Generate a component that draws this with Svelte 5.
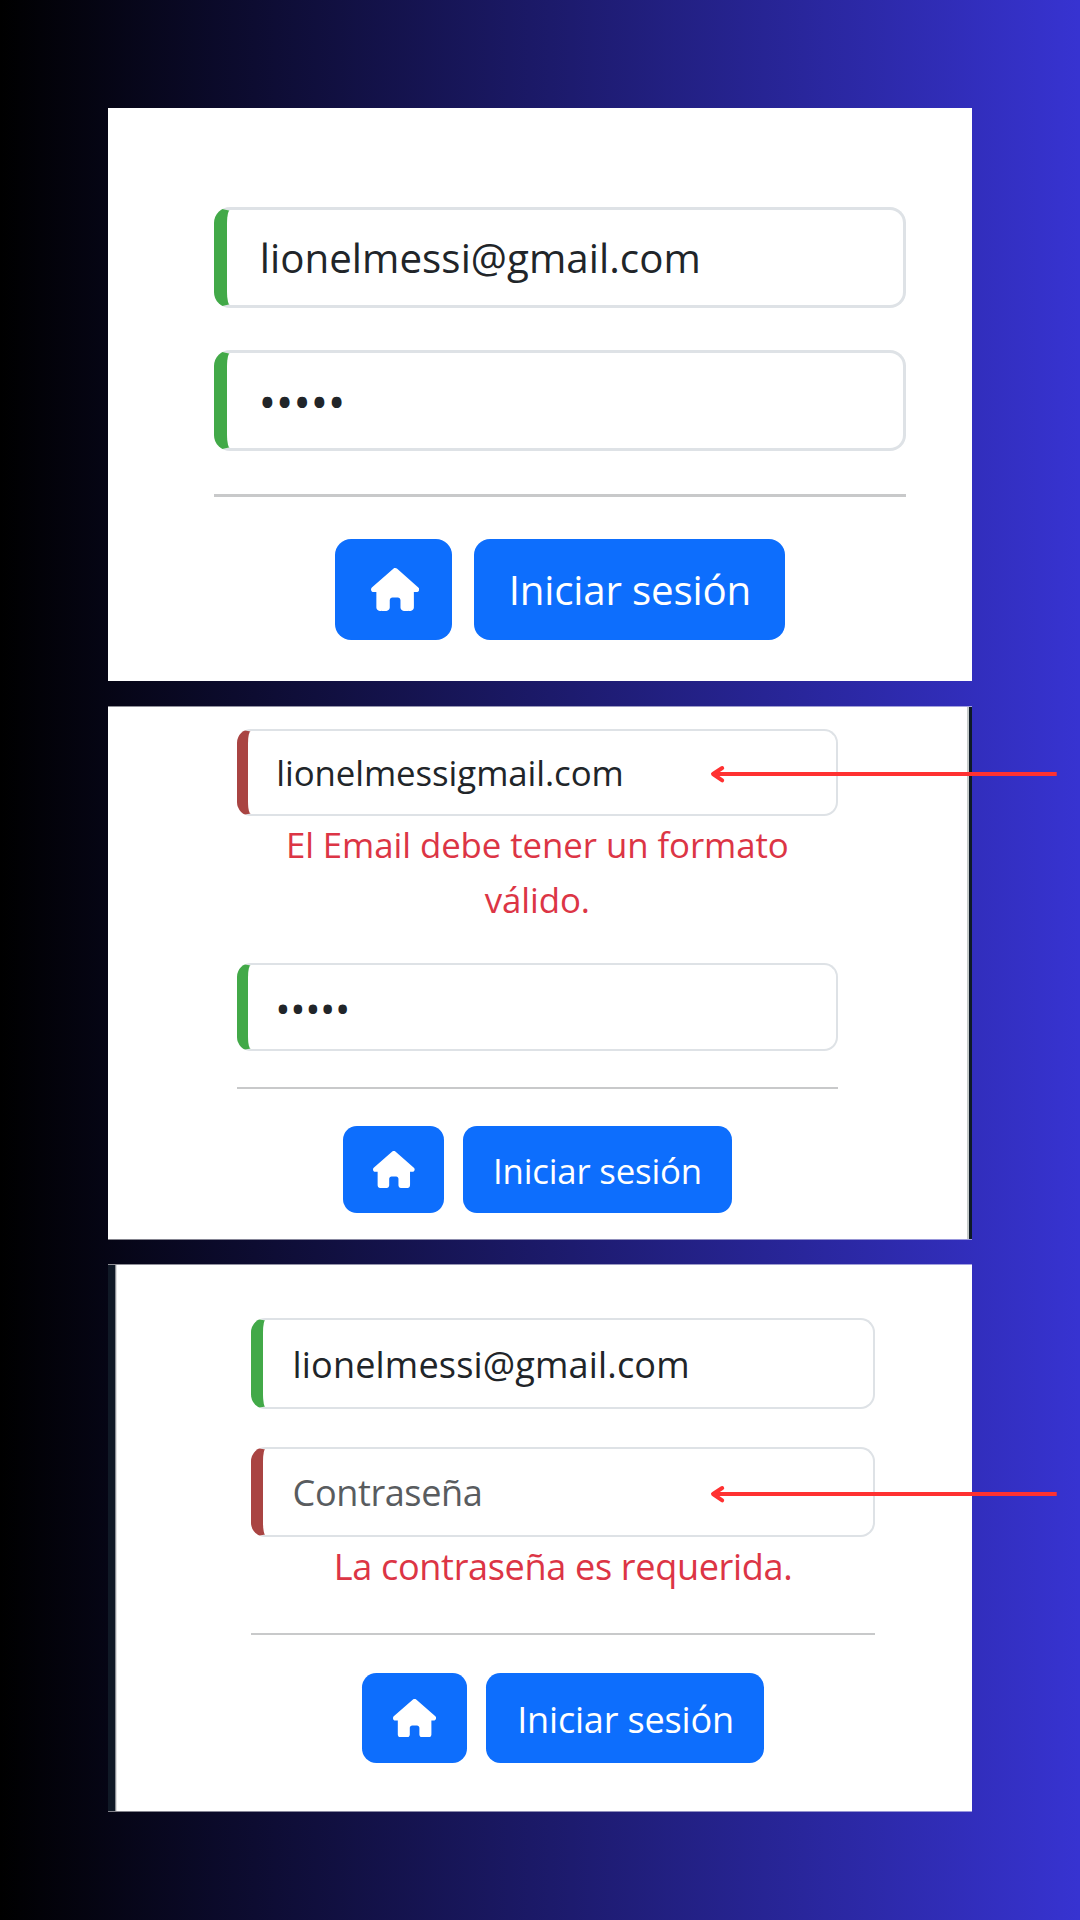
<script>
  const panels = [
    {
      id: 'valid',
      fields: [
        { kind: 'email', value: 'lionelmessi@gmail.com', ok: true },
        { kind: 'dots', value: '•••••', ok: true }
      ]
    },
    {
      id: 'bad-email',
      fields: [
        { kind: 'email', value: 'lionelmessigmail.com', ok: false, error: 'El Email debe tener un formato válido.', arrow: true },
        { kind: 'dots', value: '•••••', ok: true }
      ]
    },
    {
      id: 'no-password',
      fields: [
        { kind: 'email', value: 'lionelmessi@gmail.com', ok: true },
        { kind: 'placeholder', value: 'Contraseña', ok: false, error: 'La contraseña es requerida.', arrow: true }
      ]
    }
  ];
</script>

<main class="page">
  {#each panels as panel (panel.id)}
    <section class="panel {panel.id}">
      <div class="form">
        {#each panel.fields as field}
          <div class="group">
            <div class="control {field.kind}" class:ok={field.ok}>
              <span>{field.value}</span>
              {#if field.arrow}
                <svg class="arrow" viewBox="0 0 348 20" fill="none" stroke="#ff3131" stroke-width="4">
                  <path d="M3 10H346.7" />
                  <path d="M12.2 4L3 10L12.2 16.3" stroke-linecap="round" stroke-linejoin="round" />
                </svg>
              {/if}
            </div>
            {#if field.error}<p class="error">{field.error}</p>{/if}
          </div>
        {/each}
        <div class="rule"></div>
        <div class="actions">
          <button class="home" aria-label="Inicio">
            <svg viewBox="0 0 576 512" fill="currentColor">
              <path d="M575.8 255.5c0 18-15 32.1-32 32.1h-32l.7 160.2c0 2.7-.2 5.4-.5 8.1V472c0 22.1-17.9 40-40 40H456c-1.1 0-2.2 0-3.3-.1c-1.4 .1-2.8 .1-4.2 .1H416 392c-22.1 0-40-17.9-40-40V448 384c0-17.7-14.3-32-32-32H256c-17.7 0-32 14.3-32 32v64 24c0 22.1-17.9 40-40 40H160 128.1c-1.5 0-3-.1-4.5-.2c-1.2 .1-2.4 .2-3.6 .2H104c-22.1 0-40-17.9-40-40V360c0-.9 0-1.9 .1-2.8V287.6H32c-18 0-32-14-32-32.1c0-9 3-17 10-24L266.4 8c7-7 15-8 22-8s15 2 21 7L564.8 231.5c8 7 12 15 11 24z" />
            </svg>
          </button>
          <button class="login">Iniciar sesión</button>
        </div>
      </div>
    </section>
  {/each}
</main>

<style>
  :global(body) {
    margin: 0;
  }

  .page {
    box-sizing: border-box;
    width: 1080px;
    height: 1920px;
    padding: 108px 108px 0;
    overflow: hidden;
    background: linear-gradient(90deg, #000 0%, #3733d1 100%);
    font-family: 'Open Sans', 'Noto Sans', sans-serif;
  }

  /* --u and --v are the horizontal and vertical zoom of one form pixel */
  .panel {
    box-sizing: border-box;
    background: #fff;
    background-clip: padding-box;
    font-size: calc(var(--u) * 15.04);
  }

  .valid {
    --u: 2.68px;
    --v: 2.654px;
    --line: 3px;
    height: 573px;
    padding: 99px 0 0 106px;
  }

  .bad-email {
    --u: 2.315px;
    --v: 2.297px;
    --line: 2px;
    height: 534px;
    margin-top: 25px;
    padding: 22px 0 0 129px;
    border-top: 1px solid rgb(255 255 255 / 0.55);
    border-bottom: 1px solid rgb(255 255 255 / 0.5);
    background-image: linear-gradient(90deg, transparent 859px, #c5cac9 859px 861px, #0d1a26 861px);
  }

  .no-password {
    --u: 2.4px;
    --v: 2.383px;
    --line: 2px;
    height: 548px;
    margin-top: 24px;
    padding: 53px 0 0 143.3px;
    border-top: 1px solid rgb(255 255 255 / 0.55);
    border-bottom: 1px solid rgb(255 255 255 / 0.5);
    background-image: linear-gradient(90deg, #101926 7px, #8b8f95 7px 8px, #dedede 8px 9px, transparent 9px);
  }

  .form {
    width: 692.4px;
  }

  .bad-email .form {
    width: 600.6px;
  }

  .no-password .form {
    width: 623.6px;
  }

  .group {
    margin-bottom: calc(var(--v) * 16);
  }

  .control {
    position: relative;
    box-sizing: border-box;
    display: flex;
    align-items: center;
    height: calc(var(--v) * 38);
    padding: 1px 0 0 calc(var(--u) * 12.2);
    border: var(--line) solid #dee2e6;
    border-left: calc(var(--u) * 5) solid #a94442;
    border-radius: calc(var(--u) * 6);
    color: #212529;
    line-height: 1.5;
    white-space: nowrap;
  }

  .control.ok {
    border-left-color: #42a948;
  }

  .email {
    letter-spacing: 0.05px;
  }

  .valid .email {
    padding-top: 2px;
  }

  .bad-email .email {
    letter-spacing: -0.07px;
  }

  .no-password .email {
    letter-spacing: 0.15px;
  }

  .placeholder {
    color: #595c5f;
    letter-spacing: -0.4px;
  }

  .dots {
    padding-top: 4px;
    padding-left: calc(var(--u) * 11.8);
    font-size: calc(var(--u) * 17.6);
    letter-spacing: -0.01em;
  }

  .arrow {
    position: absolute;
    width: 348px;
    height: 20px;
  }

  .bad-email .arrow {
    left: 461.8px;
    top: 33.3px;
  }

  .no-password .arrow {
    left: 446.6px;
    top: 35.3px;
  }

  .error {
    margin: 0 0 -1px;
    padding: 1px 24px 0;
    color: #dc3545;
    line-height: calc(var(--v) * 24);
    text-align: center;
    letter-spacing: -0.07px;
  }

  .no-password .error {
    letter-spacing: -0.34px;
  }

  .rule {
    height: var(--line);
    background: #c8c9ca;
  }

  .actions {
    display: flex;
    justify-content: center;
    gap: calc(var(--u) * 7.9);
    margin-top: calc(var(--v) * 16);
  }

  button {
    box-sizing: border-box;
    display: flex;
    align-items: center;
    justify-content: center;
    height: calc(var(--v) * 38);
    padding: 0 0 0 1px;
    border: 0;
    border-radius: calc(var(--u) * 6);
    background: #0d6efd;
    color: #fff;
    font: inherit;
    line-height: 1.5;
    letter-spacing: -0.2px;
  }

  .home {
    width: calc(var(--u) * 43.7);
  }

  .valid .home {
    padding-left: 2px;
  }

  .home svg {
    width: calc(var(--u) * 18);
    height: calc(var(--u) * 16);
  }

  .login {
    width: calc(var(--u) * 116.2);
    padding-top: 2px;
  }
</style>
